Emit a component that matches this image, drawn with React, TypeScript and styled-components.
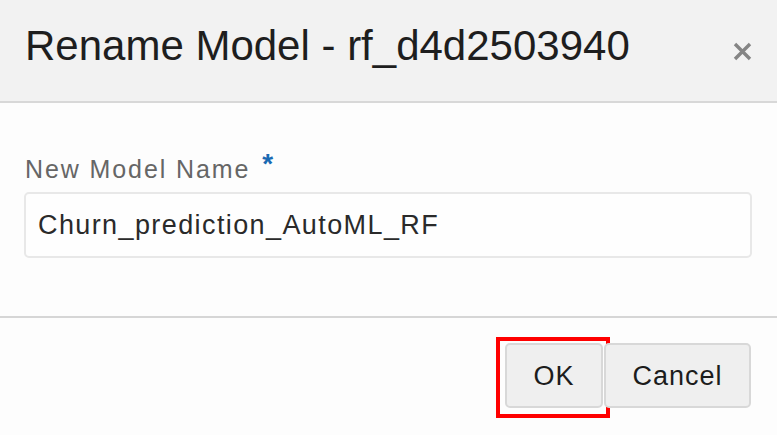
import styled, { createGlobalStyle } from "styled-components";

const Global = createGlobalStyle`
  html, body {
    margin: 0;
    padding: 0;
    background: #ffffff;
  }
  body {
    font-family: "Liberation Sans", Arial, sans-serif;
  }
`;

const Dialog = styled.div`
  width: 777px;
  height: 435px;
  display: flex;
  flex-direction: column;
  background: #fdfdfd;
  overflow: hidden;
`;

const Header = styled.div`
  flex: 0 0 103px;
  box-sizing: border-box;
  display: flex;
  align-items: flex-start;
  justify-content: space-between;
  padding: 22px 25px 0 25px;
  background: #f2f2f2;
  border-bottom: 2px solid #d8d8d8;
`;

const Title = styled.h1`
  margin: 0;
  font-size: 42px;
  line-height: 48px;
  font-weight: 400;
  color: #1e1e1e;
`;

const Close = styled.button`
  margin-top: 19px;
  width: 20px;
  height: 20px;
  padding: 0;
  border: none;
  background: transparent;
  display: flex;
  align-items: center;
  justify-content: center;
  cursor: pointer;
`;

const Body = styled.div`
  flex: 0 0 215px;
  box-sizing: border-box;
  padding: 52px 24px 0 24px;
  display: flex;
  flex-direction: column;
  border-bottom: 2px solid #d6d6d6;
`;

const Label = styled.label`
  display: flex;
  align-items: flex-start;
  gap: 12px;
  font-size: 25px;
  line-height: 29px;
  letter-spacing: 1.9px;
  color: #666666;
  padding-left: 1px;
`;

const Required = styled.span`
  color: #1a6ab3;
  font-size: 28px;
  line-height: 18px;
  font-weight: 700;
  letter-spacing: 0;
`;

const Input = styled.input`
  margin-top: 8px;
  width: 728px;
  height: 66px;
  box-sizing: border-box;
  padding: 0 12px;
  border: 2px solid #e8e8e8;
  border-radius: 5px;
  background: #fefefe;
  font-family: "Liberation Sans", Arial, sans-serif;
  font-size: 27px;
  letter-spacing: 1.4px;
  color: #2a2a2a;
  outline: none;
`;

const Footer = styled.div`
  flex: 1;
  display: flex;
  justify-content: flex-end;
  align-items: flex-start;
  gap: 1px;
  padding: 25px 26px 0 0;
`;

const Button = styled.button<{ $w: number }>`
  position: relative;
  width: ${(p) => p.$w}px;
  height: 65px;
  box-sizing: border-box;
  padding-top: 3px;
  border: 2px solid #d8d8d8;
  border-radius: 5px;
  background: #efefef;
  font-family: "Liberation Sans", Arial, sans-serif;
  font-size: 27px;
  letter-spacing: 1px;
  color: #1c1c1c;
  cursor: pointer;
`;

const Highlight = styled.span`
  position: absolute;
  left: -11px;
  top: -8px;
  right: -9px;
  bottom: -12px;
  border: 4px solid #ff0000;
  pointer-events: none;
`;

export default function App() {
  return (
    <>
      <Global />
      <Dialog>
        <Header>
          <Title>Rename Model - rf_d4d2503940</Title>
          <Close aria-label="Close">
            <svg width="19" height="19" viewBox="0 0 19 19">
              <path
                d="M2 2 L17 17 M17 2 L2 17"
                stroke="#858585"
                strokeWidth="3.4"
              />
            </svg>
          </Close>
        </Header>
        <Body>
          <Label>
            New Model Name <Required>*</Required>
          </Label>
          <Input defaultValue="Churn_prediction_AutoML_RF" />
        </Body>
        <Footer>
          <Button $w={98}>
            OK
            <Highlight />
          </Button>
          <Button $w={147}>Cancel</Button>
        </Footer>
      </Dialog>
    </>
  );
}
